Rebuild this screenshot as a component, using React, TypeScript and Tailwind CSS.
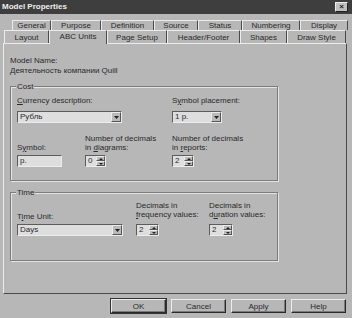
const face = "bg-[#b7b7b7]"

function Tab({ label, w, active }: { label: string; w: number; active?: boolean }) {
  return (
    <div
      style={{ width: w }}
      className={
        active
          ? "relative z-10 -mb-px flex h-[14px] items-start justify-center border-l border-t border-r border-l-[#ececec] border-t-[#ececec] border-r-[#4a4a4a] bg-[#b7b7b7] pt-[1px] leading-[9px]"
          : "flex h-full items-center justify-center border-l border-t border-r border-l-[#ececec] border-t-[#ececec] border-r-[#4a4a4a] leading-[9px]"
      }
    >
      {label}
    </div>
  )
}

function Combo({ value, w }: { value: string; w: number }) {
  return (
    <div style={{ width: w }} className="flex h-[12px] border border-t-[#5c5c5c] border-l-[#5c5c5c] border-b-[#ececec] border-r-[#ececec] bg-[#dedede]">
      <div className="flex-1 pl-[2px] leading-[10px]">{value}</div>
      <div className="flex w-[10px] items-center justify-center border border-t-[#ececec] border-l-[#ececec] border-b-[#555] border-r-[#555] bg-[#bababa]">
        <svg width="5" height="3" viewBox="0 0 5 3">
          <path d="M0 0h5L2.5 3z" fill="#222" />
        </svg>
      </div>
    </div>
  )
}

function Spin({ value, w }: { value: string; w: number }) {
  return (
    <div style={{ width: w }} className="flex h-[12px] border border-t-[#5c5c5c] border-l-[#5c5c5c] border-b-[#ececec] border-r-[#ececec] bg-[#dedede]">
      <div className="flex-1 pl-[2px] leading-[10px]">{value}</div>
      <div className="flex w-[9px] flex-col bg-[#bababa]">
        <div className="flex flex-1 items-center justify-center border border-t-[#ececec] border-l-[#ececec] border-b-[#555] border-r-[#555]">
          <svg width="4" height="2" viewBox="0 0 4 2"><path d="M0 2h4L2 0z" fill="#222" /></svg>
        </div>
        <div className="flex flex-1 items-center justify-center border border-t-[#ececec] border-l-[#ececec] border-b-[#555] border-r-[#555]">
          <svg width="4" height="2" viewBox="0 0 4 2"><path d="M0 0h4L2 2z" fill="#222" /></svg>
        </div>
      </div>
    </div>
  )
}

function Group({ title, h, children }: { title: string; h: number; children: React.ReactNode }) {
  return (
    <div style={{ height: h }} className="relative w-[268px] border border-[#7c7c7c] shadow-[1px_1px_0_#e4e4e4,inset_1px_1px_0_#e4e4e4]">
      <span className={"absolute -top-[5px] left-[5px] px-[1px] leading-[9px] " + face}>{title}</span>
      {children}
    </div>
  )
}

function Btn({ label, isDefault }: { label: string; isDefault?: boolean }) {
  return (
    <div
      className={
        "flex h-[14px] w-[55px] items-center justify-center border border-t-[#ececec] border-l-[#ececec] border-b-[#2a2a2a] border-r-[#2a2a2a] shadow-[inset_-1px_-1px_0_#7a7a7a] leading-[9px] " +
        (isDefault ? "outline outline-1 outline-[#333]" : "")
      }
    >
      {label}
    </div>
  )
}

export default function App() {
  return (
    <div
      className={"flex h-[318px] w-[352px] flex-col overflow-hidden text-[8px] text-[#2a2a2a] " + face}
      style={{ fontFamily: '"Liberation Sans", Arial, sans-serif' }}
    >
      {/* title bar */}
      <div className="flex h-[14px] items-center justify-between bg-[#3e3e3e] pl-[2px] pr-[4px]">
        <span className="text-[8px] font-bold leading-[10px] text-[#eeeeee]">Model Properties</span>
        <div className="flex h-[10px] w-[13px] items-center justify-center border border-t-[#ececec] border-l-[#ececec] border-b-[#222] border-r-[#222] bg-[#c0c0c0] text-[8px] font-bold leading-[8px] text-[#222]">
          ×
        </div>
      </div>

      {/* tabs */}
      <div className="mt-[6px] flex h-[10px] pl-[12px]">
        <Tab label="General" w={39} />
        <Tab label="Purpose" w={50} />
        <Tab label="Definition" w={53} />
        <Tab label="Source" w={44} />
        <Tab label="Status" w={44} />
        <Tab label="Numbering" w={58} />
        <Tab label="Display" w={48} />
      </div>
      <div className="flex h-[13px] items-end pl-[4px]">
        <div className="flex h-[13px]">
          <Tab label="Layout" w={45} />
        </div>
        <Tab label="ABC Units" w={58} active />
        <div className="flex h-[13px]">
          <Tab label="Page Setup" w={60} />
          <Tab label="Header/Footer" w={73} />
          <Tab label="Shapes" w={47} />
          <Tab label="Draw Style" w={59} />
        </div>
      </div>

      {/* panel */}
      <div className="ml-[3px] flex h-[251px] w-[344px] flex-col border border-t-[#ececec] border-l-[#ececec] border-b-[#4a4a4a] border-r-[#4a4a4a] pl-[6px] pt-[12px]">
        <div className="leading-[10px]">Model Name:</div>
        <div className="leading-[10px]">Деятельность компании Quill</div>

        <div className="mt-[10px]">
          <Group title="Cost" h={95}>
            <div className="flex pl-[6px] pt-[9px]">
              <div className="flex w-[155px] flex-col">
                <span className="mb-[6px] leading-[9px]"><u>C</u>urrency description:</span>
                <Combo value="Рубль" w={105} />
              </div>
              <div className="flex flex-col">
                <span className="mb-[6px] leading-[9px]">S<u>y</u>mbol placement:</span>
                <Combo value="1 р." w={50} />
              </div>
            </div>
            <div className="mt-[11px] flex items-end pl-[6px]">
              <div className="flex w-[68px] flex-col">
                <span className="mb-[3px] leading-[9px]">S<u>y</u>mbol:</span>
                <div className="h-[12px] w-[45px] border border-t-[#5c5c5c] border-l-[#5c5c5c] border-b-[#ececec] border-r-[#ececec] bg-[#dedede] pl-[2px] leading-[10px]">
                  р.
                </div>
              </div>
              <div className="flex w-[87px] flex-col">
                <span className="mb-[3px] leading-[9px]">
                  Number of decimals
                  <br />
                  in <u>d</u>iagrams:
                </span>
                <Spin value="0" w={21} />
              </div>
              <div className="flex flex-col">
                <span className="mb-[3px] leading-[9px]">
                  Number of decimals
                  <br />
                  in <u>r</u>eports:
                </span>
                <Spin value="2" w={22} />
              </div>
            </div>
          </Group>
        </div>

        <div className="mt-[11px]">
          <Group title="Time" h={69}>
            <div className="flex items-end pl-[6px] pt-[8px]">
              <div className="flex w-[119px] flex-col">
                <span className="mb-[3px] leading-[9px]">T<u>i</u>me Unit:</span>
                <Combo value="Days" w={106} />
              </div>
              <div className="flex w-[73px] flex-col">
                <span className="mb-[5px] leading-[9px]">
                  Decimals in
                  <br />
                  <u>f</u>requency values:
                </span>
                <Spin value="2" w={23} />
              </div>
              <div className="flex flex-col">
                <span className="mb-[5px] leading-[9px]">
                  Decimals in
                  <br />
                  d<u>u</u>ration values:
                </span>
                <Spin value="2" w={24} />
              </div>
            </div>
          </Group>
        </div>
      </div>

      {/* buttons */}
      <div className="mt-[5px] flex gap-[5px] pl-[111px]">
        <Btn label="OK" isDefault />
        <Btn label="Cancel" />
        <Btn label="Apply" />
        <Btn label="Help" />
      </div>
    </div>
  )
}
